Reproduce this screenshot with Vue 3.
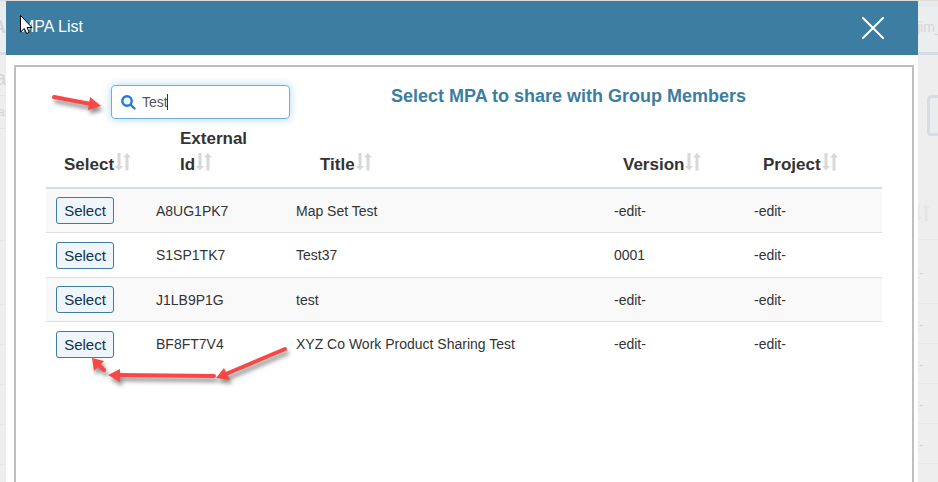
<script setup>
import { computed, ref } from "vue";

const search = ref("Test");
const sortKey = ref("");
const sortAsc = ref(true);
const open = ref(true);
const selected = ref(null);

const columns = [
  { key: "select", label: "Select" },
  { key: "id", label: "External Id" },
  { key: "title", label: "Title" },
  { key: "version", label: "Version" },
  { key: "project", label: "Project" },
];

const items = ref([
  { id: "A8UG1PK7", title: "Map Set Test", version: "-edit-", project: "-edit-" },
  { id: "S1SP1TK7", title: "Test37", version: "0001", project: "-edit-" },
  { id: "J1LB9P1G", title: "test", version: "-edit-", project: "-edit-" },
  { id: "BF8FT7V4", title: "XYZ Co Work Product Sharing Test", version: "-edit-", project: "-edit-" },
]);

const rows = computed(() => {
  const term = search.value.toLowerCase();
  const found = items.value.filter((item) =>
    (item.id + " " + item.title).toLowerCase().includes(term)
  );
  if (sortKey.value && sortKey.value !== "select") {
    const dir = sortAsc.value ? 1 : -1;
    found.sort((a, b) => a[sortKey.value].localeCompare(b[sortKey.value]) * dir);
  }
  return found;
});

const sortBy = (key) => {
  sortAsc.value = sortKey.value === key ? !sortAsc.value : true;
  sortKey.value = key;
};
</script>

<template>
  <div class="page">
    <div class="backdrop">
      <div class="strip">
        <div class="strip-header strip-logo">A</div>
        <div class="strip-body">
          <div class="strip-title">a</div>
          <div class="strip-note">an</div>
          <div class="strip-head"></div>
          <div v-for="n in 6" :key="n" class="strip-row"></div>
        </div>
      </div>
      <div class="strip strip-right">
        <div class="strip-header strip-user">jim_</div>
        <div class="strip-body">
          <div class="strip-button"></div>
          <div class="strip-sort">
            <svg width="16" height="18" viewBox="0 0 16 18">
              <path d="M2.500 0h3v13H8l-4 4.500L0 13h2.500zM10.500 17.500h3V4.500H16L12 0 8 4.500h2.500z" />
            </svg>
          </div>
          <div v-for="n in 6" :key="n" class="strip-row">t-</div>
        </div>
      </div>
    </div>

    <div v-if="open" class="modal">
      <div class="modal-header">
        <span>MPA List</span>
        <button class="close-button" aria-label="Close" @click="open = false">
          <svg width="22" height="22" viewBox="0 0 22 22">
            <path d="M1 1L21 21M21 1L1 21" />
          </svg>
        </button>
      </div>

      <div class="panel">
        <div class="toolbar">
          <label class="search-box">
            <svg width="15" height="15" viewBox="0 0 15 15">
              <circle cx="6" cy="6" r="4.700" />
              <path d="M9.500 9.500L13.500 13.500" />
            </svg>
            <input v-model="search" type="text" aria-label="Search" />
            <span class="caret"></span>
          </label>
          <h2 class="panel-title">Select MPA to share with Group Members</h2>
        </div>

        <table class="mpa-table">
          <thead>
            <tr>
              <th v-for="col in columns" :key="col.key" :class="'col-' + col.key" @click="sortBy(col.key)">
                {{ col.label }}<svg class="sort-icon" width="16" height="18" viewBox="0 0 16 18">
                  <path d="M2.500 0h3v13H8l-4 4.500L0 13h2.500zM10.500 17.500h3V4.500H16L12 0 8 4.500h2.500z" />
                </svg>
              </th>
            </tr>
          </thead>
          <tbody>
            <tr v-for="row in rows" :key="row.id">
              <td>
                <button class="select-button" @click="selected = row.id">Select</button>
              </td>
              <td>{{ row.id }}</td>
              <td>{{ row.title }}</td>
              <td>{{ row.version }}</td>
              <td>{{ row.project }}</td>
            </tr>
          </tbody>
        </table>
      </div>
    </div>

    <!-- pointer and hint arrows -->
    <svg class="hints" width="300" height="400" viewBox="0 0 300 400">
      <g class="arrows">
        <path d="M54 97L91 104M285 349L226 374M214 376L118 375M104 370L98 364" />
        <polygon points="101,106 90,97 88,110" />
        <polygon points="216,378 224,368 230,380" />
        <polygon points="108,375 120,369 120,382" />
        <polygon points="92,358 104,361 94,371" />
      </g>
      <path
        class="cursor"
        d="M20.500 15.500V32L24.300 28.500L26.700 33.500L29.200 32.300L27 27.500H32Z"
      />
    </svg>
  </div>
</template>

<style>
body {
  margin: 0;
}
</style>

<style scoped>
.page {
  position: relative;
  box-sizing: border-box;
  height: 100vh;
  padding: 1px 20px 0 6px;
  overflow: hidden;
  background-color: #eee;
  font-family: "Liberation Sans", Arial, sans-serif;
  font-size: 14px;
  color: #333;
}

.backdrop {
  position: absolute;
  inset: 0;
  display: flex;
  justify-content: space-between;
  border-top: 1px solid #dcdcdc;
  color: #d5d5d8;
}

.strip {
  width: 6px;
  overflow: hidden;
  white-space: nowrap;
}

.strip-right {
  width: 20px;
}

.strip-header {
  box-sizing: border-box;
  height: 54px;
  border-top: 6px solid #e9e9e9;
  border-bottom: 3px solid #d5dee5;
  background-color: #ebeeee;
  line-height: 40px;
}

.strip-logo {
  display: flex;
  justify-content: flex-end;
  font-size: 18px;
  font-weight: bold;
}

.strip-user {
  text-indent: -1px;
}

.strip-title {
  display: flex;
  justify-content: flex-end;
  height: 40px;
  border-bottom: 1px solid #e6e6e6;
  font-size: 20px;
  line-height: 46px;
}

.strip-note {
  height: 32px;
  margin-left: -2px;
  border-bottom: 1px solid #e6e6e6;
  font-size: 12px;
  line-height: 32px;
}

.strip-head {
  height: 111px;
  border-bottom: 1px solid #e8e8e8;
}

.strip-button {
  width: 40px;
  height: 35px;
  margin: 40px 0 0 9px;
  border: 3px solid #d5dee5;
  border-radius: 4px;
  background-color: #ebeeee;
}

.strip-sort {
  height: 35px;
  margin-top: 68px;
  border-bottom: 1px solid #e8e8e8;
}

.strip-sort svg {
  margin-left: -4px;
  fill: #e5e5e5;
}

.strip-row {
  box-sizing: border-box;
  height: 40px;
  border-bottom: 1px solid #e8e8e8;
  line-height: 42px;
  text-indent: -3px;
}

.strip-sort + .strip-row,
.strip-head + .strip-row {
  height: 64px;
  line-height: 66px;
}

.modal {
  position: relative;
  display: flex;
  flex-direction: column;
  height: 100%;
  background-color: #fff;
}

.modal-header {
  display: flex;
  align-items: center;
  justify-content: space-between;
  flex: none;
  height: 54px;
  padding: 0 34px 0 15px;
  background-color: #3c7da1;
  color: #fff;
  font-size: 16px;
}

.modal-header span {
  padding-bottom: 2px;
}

.close-button {
  display: flex;
  padding: 0;
  border: none;
  background: none;
  cursor: pointer;
}

.close-button path {
  stroke: #fff;
  stroke-width: 2;
  stroke-linecap: round;
}

.panel {
  flex: 1;
  margin: 10px 4px 0 8px;
  padding: 18px 30px 0;
  border: 2px solid #bfbfbf;
  border-bottom: none;
}

.toolbar {
  display: flex;
  align-items: flex-start;
  gap: 101px;
  padding-left: 65px;
}

.search-box {
  display: flex;
  align-items: center;
  box-sizing: border-box;
  width: 179px;
  height: 34px;
  padding: 0 9px;
  border: 1px solid #66afe9;
  border-radius: 4px;
  box-shadow: 0 0 8px rgba(102, 175, 233, 0.5);
}

.search-box svg {
  flex: none;
  margin-right: 6px;
  fill: none;
  stroke: #1f7bdc;
  stroke-width: 2.4;
  stroke-linecap: round;
}

.search-box input {
  width: 26px;
  padding: 0;
  border: none;
  outline: none;
  background: none;
  color: #555;
  font-family: inherit;
  font-size: 14px;
  field-sizing: content;
}

.caret {
  width: 1px;
  height: 16px;
  margin-left: -1px;
  background-color: #333;
}

.panel-title {
  margin: 0;
  color: #3c7da1;
  font-size: 18px;
  line-height: 22px;
}

.mpa-table {
  width: 100%;
  margin-top: 7px;
  border-collapse: separate;
  border-spacing: 0;
  table-layout: fixed;
}

.mpa-table th {
  box-sizing: border-box;
  padding: 0 0 9px 19px;
  border-bottom: 2px solid #d6dbdf;
  font-size: 17px;
  line-height: 26px;
  text-align: left;
  vertical-align: bottom;
  cursor: pointer;
}

.mpa-table .col-select {
  width: 100px;
  padding-left: 18px;
}

.mpa-table .col-id {
  width: 140px;
  padding-right: 34px;
  padding-left: 34px;
}

.mpa-table .col-title {
  padding-left: 34px;
}

.mpa-table .col-version {
  width: 140px;
}

.mpa-table .col-project {
  width: 138px;
}

.sort-icon {
  margin-left: 1px;
  vertical-align: -1px;
  fill: #d8d8d8;
}

.mpa-table td {
  box-sizing: border-box;
  height: 44px;
  padding: 0 10px;
  border-bottom: 1px solid #ddd;
}

.mpa-table tr:nth-child(odd) td {
  background-color: #f9f9f9;
}

.mpa-table tr:nth-child(even) td {
  height: 45px;
}

.mpa-table tr:last-child td {
  height: 44px;
  border-bottom: none;
  background-color: #fff;
}

.select-button {
  display: block;
  width: 58px;
  height: 27px;
  padding: 0;
  border: 1px solid #3c7da1;
  border-radius: 3px;
  background-color: #eff5fa;
  color: #0b3353;
  font-family: inherit;
  font-size: 15px;
  cursor: pointer;
}

.hints {
  position: absolute;
  top: 0;
  left: 0;
  pointer-events: none;
}

.arrows {
  fill: #fb4646;
  filter: drop-shadow(2px 4px 2px rgba(0, 0, 0, 0.45));
}

.arrows path {
  fill: none;
  stroke: #fb4646;
  stroke-width: 4;
  stroke-linecap: round;
}

.cursor {
  fill: #fff;
  stroke: #000;
  stroke-width: 1;
}
</style>
